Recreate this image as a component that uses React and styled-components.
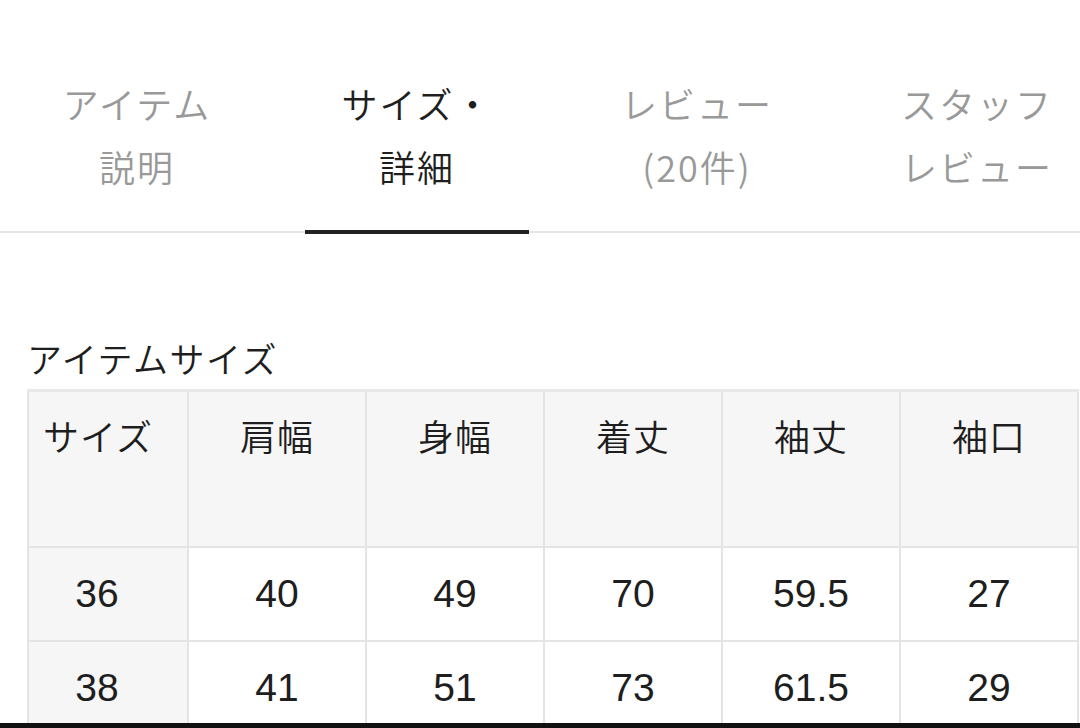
import React from "react";
import styled, { createGlobalStyle } from "styled-components";

const Global = createGlobalStyle`
  html, body { margin: 0; padding: 0; background: #fff; }
  body {
    font-family: "Noto Sans CJK JP", "Noto Sans", sans-serif;
    overflow: hidden;
  }
`;

const Page = styled.div`
  height: 728px;
  display: flex;
  flex-direction: column;
  overflow: hidden;
`;

const Content = styled.div`
  flex: 1;
  overflow: hidden;
`;

const TabBar = styled.nav`
  display: flex;
  margin-left: -3px;
  padding-top: 72px;
  border-bottom: 2px solid #e6e6e6;
`;

const Tab = styled.div`
  flex: 0 0 280px;
  display: flex;
  flex-direction: column;
  align-items: center;
  position: relative;
  padding-bottom: 33px;
  font-size: 36px;
  font-weight: 350;
  line-height: 63px;
  letter-spacing: 2px;
  color: ${(p) => (p.$active ? "#1e1e1e" : "#999")};
  &::after {
    content: "";
    display: ${(p) => (p.$active ? "block" : "none")};
    position: absolute;
    left: 10%;
    right: 10%;
    bottom: -3px;
    height: 4px;
    background: #222;
  }
`;

const Section = styled.section`
  padding: 100px 0 0 27px;
`;

const Title = styled.h2`
  margin: 0;
  font-size: 35px;
  font-weight: 350;
  line-height: 50px;
  color: #1e1e1e;
  letter-spacing: 1.5px;
`;

const Table = styled.table`
  margin-top: 6px;
  width: 1052px;
  border-collapse: collapse;
  table-layout: fixed;
  border-top: 3px solid #e8e8e8;
`;

const HeadCell = styled.th`
  height: 156px;
  box-sizing: border-box;
  vertical-align: top;
  padding: ${(p) => (p.$left ? "18px 0 0 14px" : "18px 0 0")};
  text-align: ${(p) => (p.$left ? "left" : "center")};
  font-size: 36px;
  font-weight: 350;
  line-height: 50px;
  letter-spacing: 1px;
  color: #1e1e1e;
  background: #f6f6f6;
  border: 2px solid #e4e4e4;
  border-top: none;
`;

const Cell = styled.td`
  height: 94px;
  box-sizing: border-box;
  text-align: center;
  vertical-align: middle;
  font-family: "Liberation Sans", Arial, sans-serif;
  font-size: 39px;
  font-weight: 400;
  line-height: 46px;
  color: #1e1e1e;
  background: ${(p) => (p.$first ? "#f6f6f6" : "#fff")};
  border: 2px solid #e4e4e4;
  padding: ${(p) => (p.$first ? "0 22px 0 0" : "0")};
`;

const BottomBar = styled.div`
  flex: 0 0 5px;
  background: #111;
`;

const tabs = [
  ["アイテム", "説明"],
  ["サイズ・", "詳細"],
  ["レビュー", "(20件)"],
  ["スタッフ", "レビュー"],
];

const headers = ["サイズ", "肩幅", "身幅", "着丈", "袖丈", "袖口"];
const rows = [
  ["36", "40", "49", "70", "59.5", "27"],
  ["38", "41", "51", "73", "61.5", "29"],
];

export default function App() {
  return (
    <Page>
      <Global />
      <Content>
        <TabBar>
          {tabs.map((t, i) => (
            <Tab key={i} $active={i === 1}>
              <span>{t[0]}</span>
              <span>{t[1]}</span>
            </Tab>
          ))}
        </TabBar>
        <Section>
          <Title>アイテムサイズ</Title>
          <Table>
            <colgroup>
              <col style={{ width: 160 }} />
              <col />
              <col />
              <col />
              <col />
              <col />
            </colgroup>
            <thead>
              <tr>
                {headers.map((h, i) => (
                  <HeadCell key={h} $left={i === 0}>
                    {h}
                  </HeadCell>
                ))}
              </tr>
            </thead>
            <tbody>
              {rows.map((r) => (
                <tr key={r[0]}>
                  {r.map((v, i) => (
                    <Cell key={i} $first={i === 0}>
                      {v}
                    </Cell>
                  ))}
                </tr>
              ))}
            </tbody>
          </Table>
        </Section>
      </Content>
      <BottomBar />
    </Page>
  );
}
